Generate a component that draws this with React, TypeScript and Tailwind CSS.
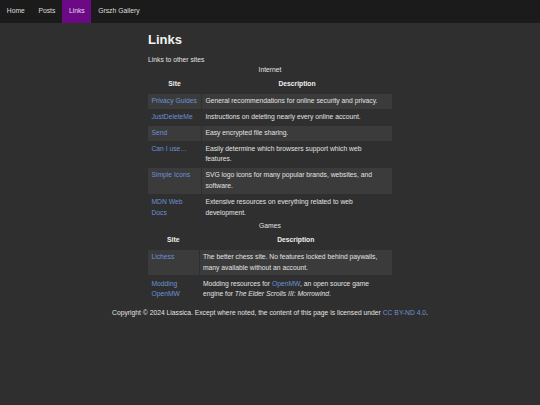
import React from "react";

const L = "text-[#6b92d6]";

function InternetRows() {
  const rows: [React.ReactNode, React.ReactNode][] = [
    [<span className="whitespace-nowrap">Privacy Guides</span>, "General recommendations for online security and privacy."],
    ["JustDeleteMe", "Instructions on deleting nearly every online account."],
    ["Send", "Easy encrypted file sharing."],
    ["Can I use…", "Easily determine which browsers support which web features."],
    ["Simple Icons", "SVG logo icons for many popular brands, websites, and software."],
    ["MDN Web Docs", "Extensive resources on everything related to web development."],
  ];
  return (
    <>
      {rows.map(([s, d], i) => (
        <tr key={i} className={i % 2 === 0 ? "bg-[#3b3b3b]" : ""}>
          <td className={`align-top px-[3.4px] py-[2.2px] ${L}`}>{s}</td>
          <td className="align-top pl-[3.4px] pr-[6px] py-[2.2px]">{d}</td>
        </tr>
      ))}
    </>
  );
}

export default function App() {
  return (
    <div
      className="min-h-screen bg-[#2f2f2f] text-[#e2e2e2] text-[6.75px] leading-[10.6px]"
      style={{ fontFamily: '"Liberation Sans", Arial, sans-serif' }}
    >
      <nav className="flex h-[23px] bg-[#1b1b1b] text-[#dedede]">
        <a className="flex items-center px-[6.8px]">Home</a>
        <a className="flex items-center px-[6.8px]">Posts</a>
        <a className="flex items-center px-[6.8px] bg-[#6c0a86] text-[#ead8f0]">Links</a>
        <a className="flex items-center px-[6.8px]">Grszh Gallery</a>
      </nav>
      <main className="w-[246px] mx-auto">
        <h1 className="mt-[8.5px] ml-[1px] text-[13px] leading-[15px] font-bold text-[#f2f2f2]">Links</h1>
        <p className="mt-[8px] ml-[1px]">Links to other sites</p>
        <table className="w-full table-fixed border-separate border-spacing-[1.5px]">
          <caption className="leading-[10px]">Internet</caption>
          <colgroup>
            <col className="w-[53px]" />
            <col />
          </colgroup>
          <thead>
            <tr>
              <th className="font-bold py-[3px] text-center text-[#f0f0f0]">Site</th>
              <th className="font-bold py-[3px] text-center text-[#f0f0f0]">Description</th>
            </tr>
          </thead>
          <tbody>
            <InternetRows />
          </tbody>
        </table>
        <table className="w-full table-fixed border-separate border-spacing-[1.5px]">
          <caption className="leading-[10px]">Games</caption>
          <colgroup>
            <col className="w-[50.5px]" />
            <col />
          </colgroup>
          <thead>
            <tr>
              <th className="font-bold py-[3px] text-center text-[#f0f0f0]">Site</th>
              <th className="font-bold py-[3px] text-center text-[#f0f0f0]">Description</th>
            </tr>
          </thead>
          <tbody>
            <tr className="bg-[#3b3b3b]">
              <td className={`align-top px-[3.4px] py-[2.2px] ${L}`}>Lichess</td>
              <td className="align-top pl-[3.4px] pr-[6px] py-[2.2px]">
                The better chess site. No features locked behind paywalls, many available without an account.
              </td>
            </tr>
            <tr>
              <td className={`align-top px-[3.4px] py-[2.2px] ${L}`}>Modding OpenMW</td>
              <td className="align-top pl-[3.4px] pr-[6px] py-[2.2px]">
                Modding resources for <span className={L}>OpenMW</span>, an open source game engine for{" "}
                <i>The Elder Scrolls III: Morrowind</i>.
              </td>
            </tr>
          </tbody>
        </table>
      </main>
      <footer className="mt-[5.4px] text-center">
        Copyright © 2024 Liassica. Except where noted, the content of this page is licensed under{" "}
        <span className={L}>CC BY-ND 4.0</span>.
      </footer>
    </div>
  );
}
